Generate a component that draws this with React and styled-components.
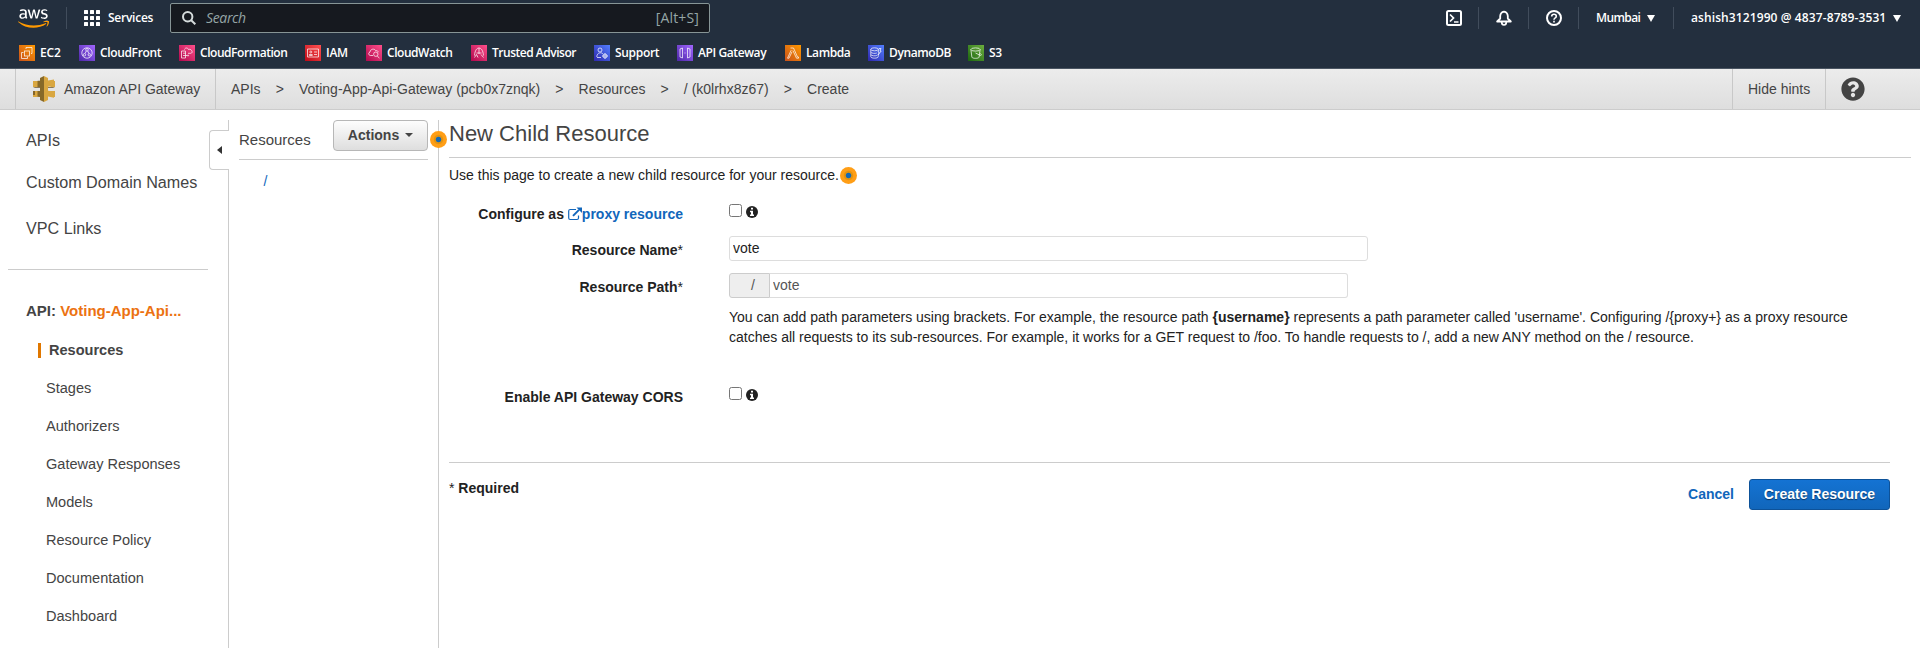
import React from "react";
import styled, { createGlobalStyle, css } from "styled-components";
import { FaAws, FaQuestionCircle } from "react-icons/fa";

const GlobalStyle = createGlobalStyle`
  *, *::before, *::after { box-sizing: border-box; }
  body {
    margin: 0;
    background: #fff;
    color: #222;
    font: 14px/20px "Liberation Sans", Arial, sans-serif;
    overflow: hidden;
  }
`;

const Page = styled.div`
  display: flex;
  flex-direction: column;
  height: 648px;
`;

/* ---------- global navigation ---------- */

const Nav = styled.header`
  height: 69px;
  flex: none;
  background: #232f3e;
  border-bottom: 1px solid #4a5562;
  color: #fff;
  font: 600 12px/16px "Open Sans", "Noto Sans", sans-serif;
`;

const NavRow = styled.div`
  display: flex;
  align-items: center;
  height: 36px;
`;

const Logo = styled(FaAws)`
  width: 31px;
  height: 25px;
  margin: 1px 17px 0 18px;
  path { fill: url(#aws-logo-fill); }
`;

const NavDivider = styled.span`
  width: 1px;
  height: 22px;
  background: #414d5c;
`;

const ServicesButton = styled.div`
  display: flex;
  align-items: center;
  gap: 8px;
  width: 103px;
  padding-left: 17px;
  letter-spacing: -0.25px;
`;

const SearchBox = styled.div`
  display: flex;
  align-items: center;
  width: 540px;
  height: 30px;
  padding: 0 10px 0 11px;
  background: #16191f;
  border: 1px solid #879596;
  border-radius: 2px;
  color: #95a5a6;
  font-weight: 400;
  font-size: 14px;
`;

const SearchHint = styled.span`
  flex: 1;
  margin-left: 10px;
  font-style: italic;
  letter-spacing: -0.35px;
`;

const Shortcut = styled.span`
  letter-spacing: 0.15px;
`;

const NavTools = styled.div`
  display: flex;
  align-items: center;
  margin-left: auto;
  padding-right: 19px;
`;

const ToolIcon = styled.svg`
  width: 16px;
  height: 16px;
  margin: 0 ${(p) => p.$right ?? 17}px 0 ${(p) => p.$left ?? 17}px;
  fill: none;
  stroke: #fff;
  stroke-width: 2;
`;

const NavMenu = styled.div`
  display: flex;
  align-items: center;
  justify-content: space-between;
  width: ${(p) => p.$width}px;
  margin-left: 17px;
  margin-right: ${(p) => p.$right ?? 0}px;
  letter-spacing: ${(p) => p.$tracking ?? 0}px;
  white-space: nowrap;
`;

const MenuCaret = styled.span`
  border: 4px solid transparent;
  border-top: 7px solid #fff;
  border-bottom: 0;
`;

const Favorites = styled.div`
  display: flex;
  height: 32px;
  padding: 9px 0 0 19px;
`;

const Favorite = styled.div`
  display: flex;
  flex: none;
  gap: 5px;
  width: ${(p) => p.$width}px;
  white-space: nowrap;
  letter-spacing: ${(p) => p.$tracking}px;
  svg { flex: none; }
`;

/* ---------- service bar ---------- */

const ServiceBar = styled.div`
  display: flex;
  align-items: stretch;
  flex: none;
  height: 41px;
  background: linear-gradient(#ececec, #dedede);
  border-bottom: 1px solid #ccc;
  color: #444;
  white-space: nowrap;
`;

const ServiceHome = styled.div`
  display: flex;
  align-items: center;
  gap: 8px;
  width: 201px;
  margin-left: 15px;
  padding-left: 16px;
  border: solid #c8c8c8;
  border-width: 0 1px;
`;

const Crumbs = styled.div`
  display: flex;
  align-items: center;
  gap: 15.1px;
  flex: 1;
  padding-left: 15px;
`;

const BarAction = styled.div`
  display: flex;
  align-items: center;
  width: ${(p) => p.$width}px;
  padding-left: 15px;
  border-left: 1px solid #c8c8c8;
`;

/* ---------- body columns ---------- */

const Body = styled.div`
  display: flex;
  flex: 1;
  padding-top: 10px;
  min-height: 0;
`;

const Sidebar = styled.nav`
  width: 209px;
  padding: 0 1px 0 8px;
  color: #444;
`;

const TopLink = styled.div`
  height: ${(p) => p.$height}px;
  padding-left: 18px;
  font-size: 16.15px;
  line-height: 40px;
`;

const Rule = styled.div`
  height: 1px;
  background: #ccc;
`;

const ApiTitle = styled.div`
  padding: 31px 0 0 18px;
  height: 61px;
  font-size: 15px;
  font-weight: 700;
  span { color: #ec7211; }
`;

const SubLink = styled.div`
  display: flex;
  align-items: center;
  height: 38px;
  padding-left: 38px;
  font-size: 14.55px;
  ${(p) => p.$active && css`
    padding-left: 30px;
    font-weight: 700;
    &::before {
      content: "";
      width: 3px;
      height: 15px;
      margin-right: 8px;
      background: #e07700;
    }
  `}
`;

const Collapser = styled.div`
  display: flex;
  flex-direction: column;
  width: 20px;
`;

const Edge = styled.div`
  height: ${(p) => (p.$height ? `${p.$height}px` : "auto")};
  flex: ${(p) => (p.$height ? "none" : 1)};
  border-right: 1px solid #ccc;
`;

const CollapseTab = styled.div`
  display: flex;
  align-items: center;
  height: 40px;
  padding-left: 7px;
  border: 1px solid #ccc;
  border-right: 0;
  border-radius: 4px 0 0 4px;
  &::before {
    content: "";
    border: 4px solid transparent;
    border-right: 5px solid #333;
    border-left: 0;
  }
`;

const TreePanel = styled.section`
  position: relative;
  width: 210px;
  padding: 0 10px;
  border-right: 1px solid #ccc;
  color: #444;
`;

const TreeHeader = styled.div`
  display: flex;
  align-items: flex-start;
  justify-content: space-between;
  height: 40px;
  border-bottom: 1px solid #ccc;
  font-size: 15px;
  line-height: 40px;
`;

const ActionsButton = styled.button`
  display: flex;
  align-items: center;
  justify-content: center;
  gap: 6px;
  width: 95px;
  height: 31px;
  padding: 0 0 1px;
  border: 1px solid #b7b7b7;
  border-radius: 4px;
  background: linear-gradient(#fdfdfd, #dedede);
  color: #444;
  font: 700 14px/20px "Liberation Sans", Arial, sans-serif;
  &::after {
    content: "";
    border: 4px solid transparent;
    border-top-color: #444;
    border-bottom: 0;
  }
`;

const TreeRoot = styled.div`
  padding: 11px 0 0 24.5px;
  color: #1166bb;
`;

const Hint = styled.span`
  flex: none;
  width: 17px;
  height: 17px;
  border-radius: 50%;
  background: radial-gradient(circle, #1569b5 0 2.3px, #e4930f 3.2px 4.2px, #ff9e16 5.2px);
`;

const PanelHint = styled(Hint)`
  position: absolute;
  top: 11px;
  right: -9px;
`;

const Main = styled.main`
  flex: 1;
  padding-left: 10px;
`;

const Title = styled.h1`
  height: 38px;
  width: 1462px;
  margin: 0;
  padding-top: 1px;
  border-bottom: 1px solid #ccc;
  color: #444;
  font-size: 22px;
  font-weight: 400;
  line-height: 26px;
`;

const Intro = styled.p`
  display: flex;
  align-items: center;
  gap: 1px;
  height: 20px;
  margin: 7px 0 0;
`;

const Form = styled.form`
  width: 1441px;
  border-bottom: 1px solid #ccc;
  height: 278px;
  padding-top: 19px;
`;

const Field = styled.div`
  display: flex;
  gap: 46px;
  height: ${(p) => p.$height}px;
`;

const Label = styled.label`
  display: flex;
  align-items: center;
  justify-content: flex-end;
  width: 234px;
  height: 20px;
  margin-top: ${(p) => p.$top ?? 0}px;
  font-weight: 700;
  white-space: pre;
`;

const Star = styled.span`
  font-weight: 400;
`;

const DocLink = styled.a`
  display: flex;
  align-items: center;
  color: #1166bb;
`;

const CheckGroup = styled.div`
  display: flex;
  align-items: flex-start;
  gap: 4px;
  svg { margin-top: 2px; }
`;

const Checkbox = styled.input.attrs({ type: "checkbox" })`
  width: 13px;
  height: 13px;
  margin: 0;
`;

const TextInput = styled.input`
  width: ${(p) => p.$width}px;
  height: 25px;
  padding: 0 3px 1px;
  border: 1px solid #ddd;
  border-radius: ${(p) => (p.$joined ? "0 3px 3px 0" : "3px")};
  border-left-width: ${(p) => (p.$joined ? 0 : 1)}px;
  outline: 0;
  color: ${(p) => (p.$joined ? "#555" : "#222")};
  font: 14px/20px "Liberation Sans", Arial, sans-serif;
`;

const PathGroup = styled.div`
  display: flex;
`;

const PathPrefix = styled.span`
  width: 41px;
  height: 25px;
  padding: 1px 0 0 21px;
  border: 1px solid #ccc;
  border-radius: 3px 0 0 3px;
  background: #eee;
  color: #555;
`;

const Help = styled.p`
  width: 1140px;
  margin: 9px 0 0;
`;

const Footer = styled.div`
  display: flex;
  align-items: flex-start;
  width: 1441px;
  padding-top: 16px;
`;

const Required = styled.div`
  flex: 1;
  margin-top: -1px;
  font-weight: 700;
`;

const Cancel = styled.a`
  margin: 5px 15px 0 0;
  color: #1166bb;
  font-weight: 700;
`;

const CreateButton = styled.button`
  width: 141px;
  height: 31px;
  padding: 0 0 1px;
  border: 1px solid #0d5299;
  border-radius: 3px;
  background: linear-gradient(#1473d3, #1166bb);
  color: #fff;
  font: 700 14px/20px "Liberation Sans", Arial, sans-serif;
  text-shadow: 0 1px 1px rgba(0, 0, 0, 0.5);
`;

/* ---------- drawings ---------- */

const glyphs = {
  ec2: <><rect x="5.5" y="6" width="5" height="5" /><path d="M4.5 7.5h-2v6h6v-2M7 4V2.5h6v6h-1" /></>,
  cloudfront: <><circle cx="8" cy="8" r="5.2" /><circle cx="8" cy="4.8" r="1.3" /><circle cx="5.5" cy="9.8" r="1.2" /><circle cx="10.3" cy="9.8" r="1.2" /><path d="M7.3 6L6 8.6M8.7 6l1.2 2.6" /></>,
  formation: <><path d="M2.5 6h4v7h-4zM4 8.2h3M4 10.5h4M5.5 4.5c.5-2 3.5-2 4 0 2-.8 3 .5 3.3 1.5.8.8.2 2.2-1 2.3H9" /><circle cx="9" cy="10.5" r=".6" /></>,
  iam: <><path d="M2.5 4h11v8h-11zM9 7h3M9 9.5h3M4.3 10.5v-1h3v1z" /><circle cx="5.8" cy="7" r="1" /></>,
  watch: <><path d="M7 10.5H4.2c-2-.4-2-3-.2-3.4.2-3.2 4.5-4 5.7-1.4 1.4-.4 2.4.3 2.5 1.5" /><circle cx="9.8" cy="9.2" r="2.2" /><path d="M11.4 11l2 2.3" /></>,
  advisor: <><path d="M3.5 10.5C4 5 6 3 8 3s4 2 4.5 7.5M5.5 8h5M3.5 12.5l2-3 1.5 3M10 9.5l2.5 3M8 3v6" /></>,
  support: <><circle cx="6" cy="5" r="2" /><path d="M2.8 12c0-5 5.5-5 6.3-2.8M3 12.5h4" /><circle cx="11" cy="11" r="2" /><path d="M11 8v6M8 11h6" /></>,
  gateway: <><path d="M5.5 3v10l-2.5-1V4zM10.5 3v10l2.5-1V4zM7 8h.5M8.5 8H9" /></>,
  lambda: <path d="M5.5 3h3l4 9h1v1.2h-2L7.9 5.5M7 6.8L4 13.2H2.5l3.7-8" />,
  dynamo: <><ellipse cx="6.5" cy="4.3" rx="3.7" ry="1.5" /><path d="M2.8 4.3v7.5c.4 1.8 7 1.8 7.4 0V9M2.8 7c.5 1.5 4.5 1.7 6 1M2.8 9.5c.5 1.4 4.5 1.7 6 .9M11 3.5h2L12 6h1.2l-3 4 1-3H10z" /></>,
  s3: <><ellipse cx="7.5" cy="4.5" rx="4.6" ry="1.6" /><path d="M2.9 4.5l1 7.7c.5 1.5 6.8 1.5 7.2 0l1-7.7M7.5 8l5 2.5 1-.8-1.8-1.5" /></>,
};

const FavoriteIcon = ({ name, from, to }) => (
  <svg width="16" height="16" viewBox="0 0 16 16">
    <defs>
      <linearGradient id={`fav-${name}`} x1="0" y1="1" x2="1" y2="0">
        <stop stopColor={from} />
        <stop offset="1" stopColor={to} />
      </linearGradient>
    </defs>
    <rect width="16" height="16" fill={`url(#fav-${name})`} />
    <g fill="none" stroke="#fff" strokeWidth=".8" opacity=".9">{glyphs[name]}</g>
  </svg>
);

const GatewayIcon = () => (
  <svg width="24" height="26" viewBox="0 0 24 26">
    <path fill="#d9a741" d="M12 0l4 2v22l-4 2zM16 4.5l6-1V10l-6 .8zM16 14.8l6 .6v6.4l-6-1.2z" />
    <path fill="#876929" d="M12 0L8 2v22l4 2zM8 4.5l-6 1V11l6-.2zM8 14.8l-6 .4v5.3l6 .6z" />
    <path fill="#d9a741" d="M1 5h4.500v6H1zM1 15h4.500v6H1zM18.500 5H23v6h-4.500zM18.500 15H23v6h-4.500z" />
    <path fill="#624a1e" d="M1 11h7v1H3zM16 11h7l-2 1h-5zM1 15h2v4H1z" opacity=".7" />
  </svg>
);

const InfoIcon = () => (
  <svg width="12" height="12" viewBox="0 0 12 12">
    <circle cx="6" cy="6" r="6" fill="#222" />
    <path d="M5 1.800h2v1.700H5zM4 4.700h3v3.700h1V10H4V8.400h1V6.200H4z" fill="#fff" />
  </svg>
);

const ExternalIcon = () => (
  <svg width="14" height="14" viewBox="0 0 14 14">
    <path d="M8 2.500H2.200Q.7 2.500.7 4v7q0 1.500 1.500 1.500H9q1.500 0 1.500-1.500V8.500" fill="none" stroke="#1166bb" strokeWidth="1.200" />
    <path d="M5 8.800L11 2.800" stroke="#1166bb" strokeWidth="1.900" />
    <path d="M8.500.5H14V6z" fill="#1166bb" />
  </svg>
);

const favorites = [
  { name: "ec2", label: "EC2", width: 60, tracking: -0.1, from: "#c8511b", to: "#f90" },
  { name: "cloudfront", label: "CloudFront", width: 100, tracking: -0.35, from: "#4d27a8", to: "#a166ff" },
  { name: "formation", label: "CloudFormation", width: 126, tracking: -0.45, from: "#b0084d", to: "#ff4f8b" },
  { name: "iam", label: "IAM", width: 61, tracking: -0.25, from: "#bd0816", to: "#ff5252" },
  { name: "watch", label: "CloudWatch", width: 105, tracking: -0.45, from: "#b0084d", to: "#ff4f8b" },
  { name: "advisor", label: "Trusted Advisor", width: 123, tracking: -0.48, from: "#b0084d", to: "#ff4f8b" },
  { name: "support", label: "Support", width: 83, tracking: -0.3, from: "#2e27ad", to: "#527fff" },
  { name: "gateway", label: "API Gateway", width: 108, tracking: -0.4, from: "#4d27a8", to: "#a166ff" },
  { name: "lambda", label: "Lambda", width: 83, tracking: -0.4, from: "#c8511b", to: "#f90" },
  { name: "dynamo", label: "DynamoDB", width: 100, tracking: -0.4, from: "#2e27ad", to: "#527fff" },
  { name: "s3", label: "S3", width: 40, tracking: -0.25, from: "#1b660f", to: "#6cae3e" },
];

const crumbs = ["APIs", "Voting-App-Api-Gateway (pcb0x7znqk)", "Resources", "/ (k0lrhx8z67)", "Create"];

const apiLinks = ["Resources", "Stages", "Authorizers", "Gateway Responses", "Models", "Resource Policy", "Documentation", "Dashboard"];

export default function App() {
  return (
    <Page>
      <GlobalStyle />
      <Nav>
        <svg width="0" height="0" style={{ display: "block" }}>
          <linearGradient id="aws-logo-fill" x1="0" y1="0" x2="0" y2="1">
            <stop offset=".64" stopColor="#fff" />
            <stop offset=".64" stopColor="#f90" />
          </linearGradient>
        </svg>
        <NavRow>
          <Logo />
          <NavDivider />
          <ServicesButton>
            <svg width="16" height="16" viewBox="0 0 16 16" fill="#fff">
              {[0, 6, 12].map((y) => [0, 6, 12].map((x) => (
                <rect key={`${x}-${y}`} x={x} y={y} width="4" height="4" rx=".5" />
              )))}
            </svg>
            Services
          </ServicesButton>
          <SearchBox>
            <svg width="14" height="14" viewBox="0 0 14 14" fill="none" stroke="#d5dbdb" strokeWidth="2">
              <circle cx="5.700" cy="5.700" r="4.700" />
              <path d="M9.200 9.200L13.300 13.300" />
            </svg>
            <SearchHint>Search</SearchHint>
            <Shortcut>[Alt+S]</Shortcut>
          </SearchBox>
          <NavTools>
            <ToolIcon viewBox="0 0 16 16" $left={0} $right={16}>
              <rect x="1" y="1" width="14" height="14" rx="1.500" />
              <path d="M4 4.500L7.500 8 4 11.500M8 12h4.500" strokeWidth="1.700" />
            </ToolIcon>
            <NavDivider />
            <ToolIcon viewBox="0 0 16 16" $right={16} strokeLinejoin="round">
              <path d="M1.200 11.500h13.600L11.800 8.500V6Q11.500 2.300 8 1.700 4.500 2.300 4.200 6v2.500z" strokeWidth="1.800" />
              <path d="M5.700 12q0 3 2.300 3t2.300-3" strokeWidth="1.700" />
            </ToolIcon>
            <NavDivider />
            <ToolIcon viewBox="0 0 16 16" $right={16}>
              <circle cx="8" cy="8" r="7" />
              <path d="M5.700 6.500Q5.700 4.300 8 4.300t2.300 2q0 1.200-1.300 1.800-1 .5-1 1.600M8 10.700v1.700" strokeWidth="1.600" />
            </ToolIcon>
            <NavDivider />
            <NavMenu $width={59} $right={18} $tracking={-0.6}>Mumbai<MenuCaret /></NavMenu>
            <NavDivider />
            <NavMenu $width={210} $tracking={0.1}>ashish3121990 @ 4837-8789-3531<MenuCaret /></NavMenu>
          </NavTools>
        </NavRow>
        <Favorites>
          {favorites.map((f) => (
            <Favorite key={f.name} $width={f.width} $tracking={f.tracking}>
              <FavoriteIcon {...f} />
              {f.label}
            </Favorite>
          ))}
        </Favorites>
      </Nav>

      <ServiceBar>
        <ServiceHome><GatewayIcon />Amazon API Gateway</ServiceHome>
        <Crumbs>
          {crumbs.map((c, i) => (
            <React.Fragment key={c}>
              {i > 0 && <span>&gt;</span>}
              <span>{c}</span>
            </React.Fragment>
          ))}
        </Crumbs>
        <BarAction $width={93}>Hide hints</BarAction>
        <BarAction $width={95}><FaQuestionCircle size={24} /></BarAction>
      </ServiceBar>

      <Body>
        <Sidebar>
          <TopLink $height={42}>APIs</TopLink>
          <TopLink $height={46}>Custom Domain Names</TopLink>
          <TopLink $height={61}>VPC Links</TopLink>
          <Rule />
          <ApiTitle>API: <span>Voting-App-Api...</span></ApiTitle>
          {apiLinks.map((l, i) => <SubLink key={l} $active={i === 0}>{l}</SubLink>)}
        </Sidebar>
        <Collapser>
          <Edge $height={10} />
          <CollapseTab />
          <Edge />
        </Collapser>
        <TreePanel>
          <TreeHeader>
            Resources
            <ActionsButton>Actions</ActionsButton>
          </TreeHeader>
          <TreeRoot>/</TreeRoot>
          <PanelHint />
        </TreePanel>
        <Main>
          <Title>New Child Resource</Title>
          <Intro>Use this page to create a new child resource for your resource.<Hint /></Intro>
          <Form>
            <Field $height={32}>
              <Label>Configure as <DocLink><ExternalIcon />proxy resource</DocLink></Label>
              <CheckGroup><Checkbox /><InfoIcon /></CheckGroup>
            </Field>
            <Field $height={37}>
              <Label $top={4}>Resource Name<Star>*</Star></Label>
              <TextInput $width={639} defaultValue="vote" />
            </Field>
            <Field $height={114}>
              <Label $top={4}>Resource Path<Star>*</Star></Label>
              <div>
                <PathGroup>
                  <PathPrefix>/</PathPrefix>
                  <TextInput $width={578} $joined defaultValue="vote" />
                </PathGroup>
                <Help>
                  You can add path parameters using brackets. For example, the resource path <b>{"{username}"}</b> represents a path parameter called 'username'. Configuring {"/{proxy+}"} as a proxy resource catches all requests to its sub-resources. For example, it works for a GET request to /foo. To handle requests to /, add a new ANY method on the / resource.
                </Help>
              </div>
            </Field>
            <Field $height={30}>
              <Label>Enable API Gateway CORS</Label>
              <CheckGroup><Checkbox /><InfoIcon /></CheckGroup>
            </Field>
          </Form>
          <Footer>
            <Required><Star>*</Star> Required</Required>
            <Cancel>Cancel</Cancel>
            <CreateButton>Create Resource</CreateButton>
          </Footer>
        </Main>
      </Body>
    </Page>
  );
}
